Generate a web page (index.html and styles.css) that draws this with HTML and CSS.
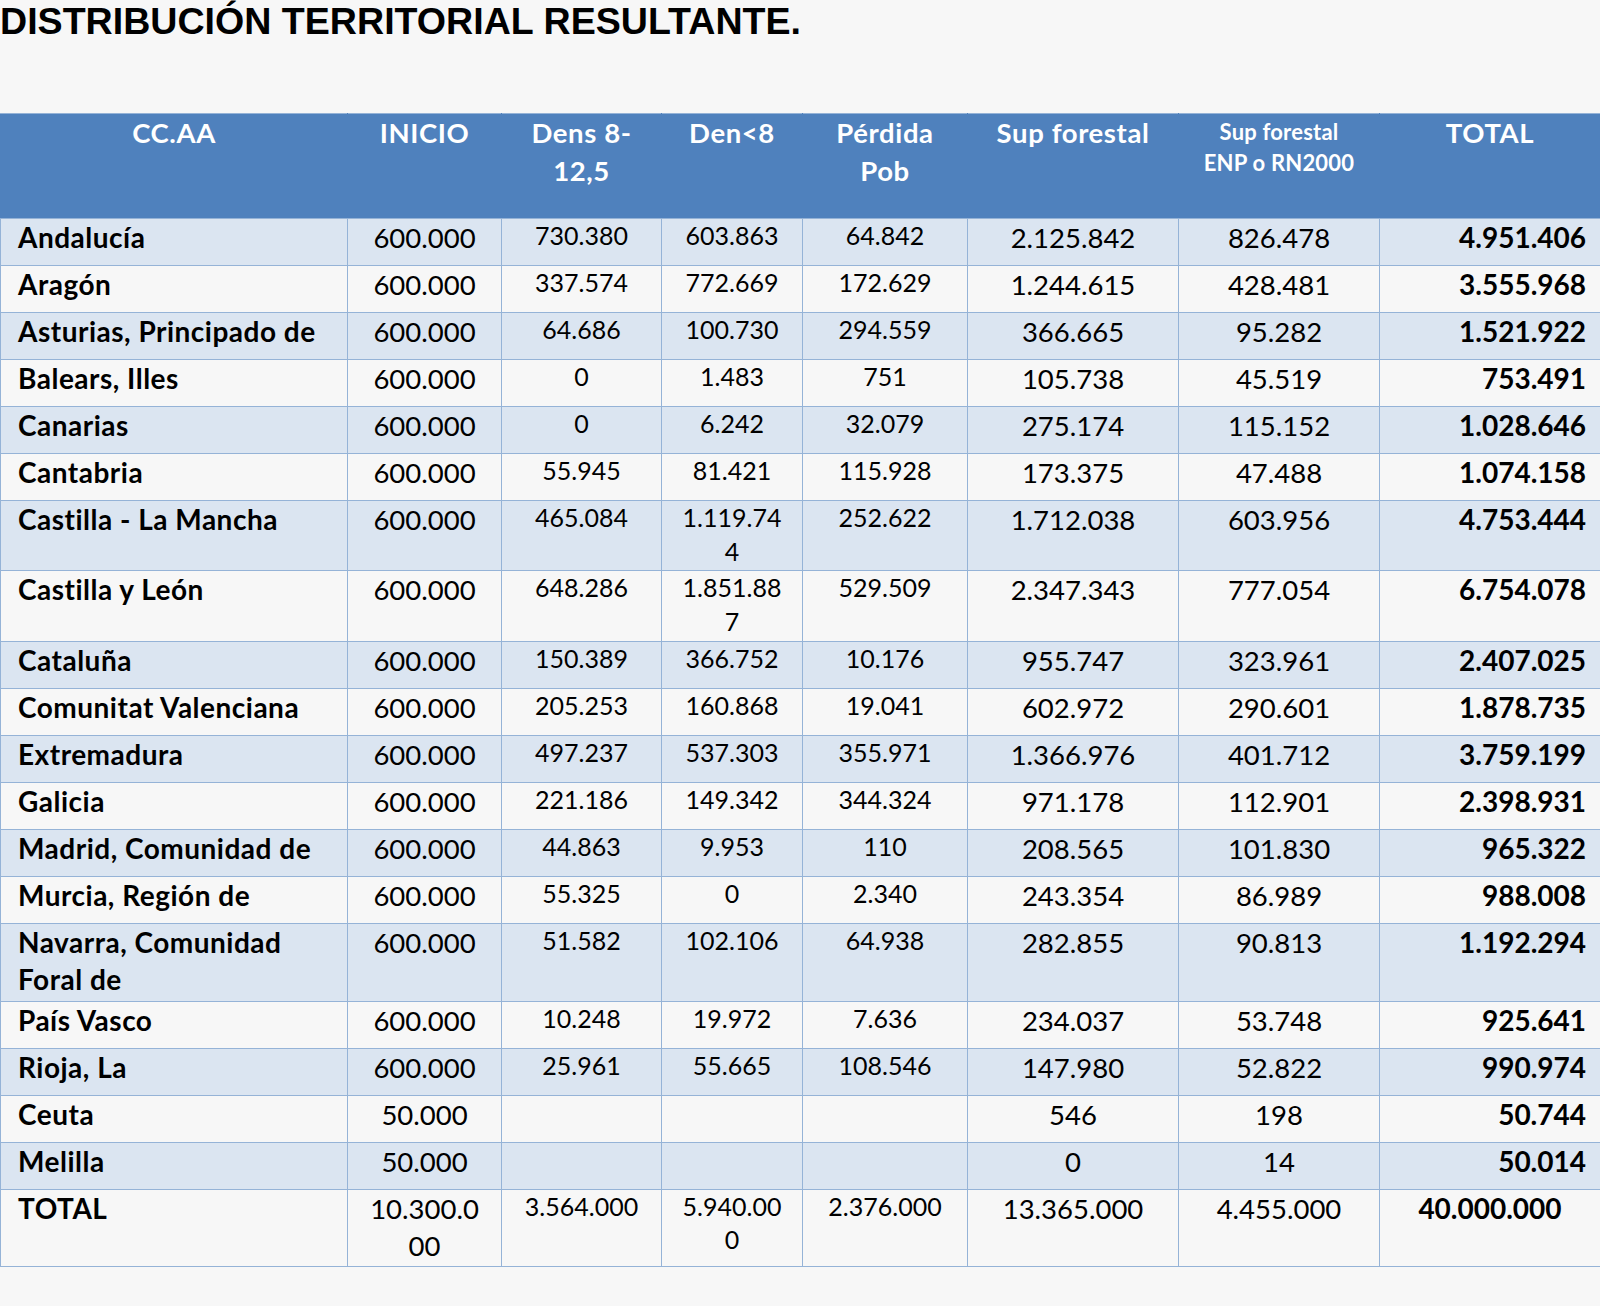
FILE: index.html
```html
<!DOCTYPE html>
<html lang="es">
<head>
<meta charset="utf-8">
<title>Distribución territorial resultante</title>
<link rel="stylesheet" href="styles.css">
</head>
<body>
<h1 class="title">DISTRIBUCIÓN TERRITORIAL RESULTANTE.</h1>
<table class="dist">
  <colgroup>
    <col class="w-name"><col class="w-inicio"><col class="w-dens"><col class="w-den"><col class="w-perd"><col class="w-sup"><col class="w-enp"><col class="w-total">
  </colgroup>
  <thead>
    <tr>
      <th>CC.AA</th>
      <th>INICIO</th>
      <th>Dens 8-<br>12,5</th>
      <th>Den&lt;8</th>
      <th>Pérdida<br>Pob</th>
      <th>Sup forestal</th>
      <th class="th-small">Sup forestal<br>ENP o RN2000</th>
      <th>TOTAL</th>
    </tr>
  </thead>
  <tbody>
    <tr><td class="name">Andalucía</td><td>600.000</td><td class="sm">730.380</td><td class="sm">603.863</td><td class="sm">64.842</td><td>2.125.842</td><td>826.478</td><td class="tot">4.951.406</td></tr>
    <tr><td class="name">Aragón</td><td>600.000</td><td class="sm">337.574</td><td class="sm">772.669</td><td class="sm">172.629</td><td>1.244.615</td><td>428.481</td><td class="tot">3.555.968</td></tr>
    <tr><td class="name">Asturias, Principado de</td><td>600.000</td><td class="sm">64.686</td><td class="sm">100.730</td><td class="sm">294.559</td><td>366.665</td><td>95.282</td><td class="tot">1.521.922</td></tr>
    <tr><td class="name">Balears, Illes</td><td>600.000</td><td class="sm">0</td><td class="sm">1.483</td><td class="sm">751</td><td>105.738</td><td>45.519</td><td class="tot">753.491</td></tr>
    <tr><td class="name">Canarias</td><td>600.000</td><td class="sm">0</td><td class="sm">6.242</td><td class="sm">32.079</td><td>275.174</td><td>115.152</td><td class="tot">1.028.646</td></tr>
    <tr><td class="name">Cantabria</td><td>600.000</td><td class="sm">55.945</td><td class="sm">81.421</td><td class="sm">115.928</td><td>173.375</td><td>47.488</td><td class="tot">1.074.158</td></tr>
    <tr><td class="name">Castilla - La Mancha</td><td>600.000</td><td class="sm">465.084</td><td class="sm">1.119.74<br>4</td><td class="sm">252.622</td><td>1.712.038</td><td>603.956</td><td class="tot">4.753.444</td></tr>
    <tr><td class="name">Castilla y León</td><td>600.000</td><td class="sm">648.286</td><td class="sm">1.851.88<br>7</td><td class="sm">529.509</td><td>2.347.343</td><td>777.054</td><td class="tot">6.754.078</td></tr>
    <tr><td class="name">Cataluña</td><td>600.000</td><td class="sm">150.389</td><td class="sm">366.752</td><td class="sm">10.176</td><td>955.747</td><td>323.961</td><td class="tot">2.407.025</td></tr>
    <tr><td class="name">Comunitat Valenciana</td><td>600.000</td><td class="sm">205.253</td><td class="sm">160.868</td><td class="sm">19.041</td><td>602.972</td><td>290.601</td><td class="tot">1.878.735</td></tr>
    <tr><td class="name">Extremadura</td><td>600.000</td><td class="sm">497.237</td><td class="sm">537.303</td><td class="sm">355.971</td><td>1.366.976</td><td>401.712</td><td class="tot">3.759.199</td></tr>
    <tr><td class="name">Galicia</td><td>600.000</td><td class="sm">221.186</td><td class="sm">149.342</td><td class="sm">344.324</td><td>971.178</td><td>112.901</td><td class="tot">2.398.931</td></tr>
    <tr><td class="name">Madrid, Comunidad de</td><td>600.000</td><td class="sm">44.863</td><td class="sm">9.953</td><td class="sm">110</td><td>208.565</td><td>101.830</td><td class="tot">965.322</td></tr>
    <tr><td class="name">Murcia, Región de</td><td>600.000</td><td class="sm">55.325</td><td class="sm">0</td><td class="sm">2.340</td><td>243.354</td><td>86.989</td><td class="tot">988.008</td></tr>
    <tr><td class="name">Navarra, Comunidad<br>Foral de</td><td>600.000</td><td class="sm">51.582</td><td class="sm">102.106</td><td class="sm">64.938</td><td>282.855</td><td>90.813</td><td class="tot">1.192.294</td></tr>
    <tr><td class="name">País Vasco</td><td>600.000</td><td class="sm">10.248</td><td class="sm">19.972</td><td class="sm">7.636</td><td>234.037</td><td>53.748</td><td class="tot">925.641</td></tr>
    <tr><td class="name">Rioja, La</td><td>600.000</td><td class="sm">25.961</td><td class="sm">55.665</td><td class="sm">108.546</td><td>147.980</td><td>52.822</td><td class="tot">990.974</td></tr>
    <tr><td class="name">Ceuta</td><td>50.000</td><td class="sm"></td><td class="sm"></td><td class="sm"></td><td>546</td><td>198</td><td class="tot">50.744</td></tr>
    <tr><td class="name">Melilla</td><td>50.000</td><td class="sm"></td><td class="sm"></td><td class="sm"></td><td>0</td><td>14</td><td class="tot">50.014</td></tr>
    <tr class="sum"><td class="name">TOTAL</td><td>10.300.0<br>00</td><td class="sm">3.564.000</td><td class="sm">5.940.00<br>0</td><td class="sm">2.376.000</td><td>13.365.000</td><td>4.455.000</td><td class="tot">40.000.000</td></tr>
  </tbody>
</table>
</body>
</html>
```

FILE: styles.css
```css
html, body {
  margin: 0;
  padding: 0;
  background: #f7f7f7;
}

.title {
  margin: 0;
  font-family: "Liberation Sans", Arial, sans-serif;
  font-weight: bold;
  font-size: 37.6px;
  line-height: 42px;
  color: #000;
}

.dist {
  margin-top: 71px;
  width: 1600px;
  table-layout: fixed;
  border-collapse: collapse;
  font-family: Lato, "Open Sans", sans-serif;
  color: #000;
}

.w-name { width: 347px; }
.w-inicio { width: 154px; }
.w-dens { width: 160px; }
.w-den { width: 141px; }
.w-perd { width: 165px; }
.w-sup { width: 211px; }
.w-enp { width: 201px; }
.w-total { width: 221px; }

.dist thead tr {
  height: 105px;
}

.dist th {
  background: #4f81bd;
  color: #fff;
  font-weight: bold;
  font-size: 27.5px;
  letter-spacing: 0.6px;
  line-height: 38px;
  text-align: center;
  vertical-align: top;
  padding: 0 4px;
  border: 1px solid #95b3d7;
  border-left-color: #4f81bd;
  border-right-color: #4f81bd;
}

.dist th.th-small {
  font-size: 22px;
  letter-spacing: 0.2px;
  line-height: 31px;
  padding-top: 2px;
}

.dist tbody tr {
  height: 47px;
}

.dist tbody tr:nth-child(odd) {
  background: #dbe5f1;
}

.dist tbody tr:nth-child(even) {
  background: #f7f7f7;
}

.dist td {
  font-size: 27.5px;
  line-height: 37.4px;
  text-align: center;
  vertical-align: top;
  padding: 0 4px 2px;
  border: 1px solid #95b3d7;
  white-space: nowrap;
}

.dist td.name {
  text-align: left;
  font-weight: bold;
  font-size: 28px;
  letter-spacing: 0.5px;
  padding-left: 17px;
}

.dist td.sm {
  font-size: 25px;
  line-height: 33.7px;
}

.dist td.tot {
  font-weight: bold;
  font-size: 28px;
  text-align: right;
  padding-right: 14px;
}

.dist tr.sum td.tot {
  text-align: center;
  padding-right: 4px;
}
```
